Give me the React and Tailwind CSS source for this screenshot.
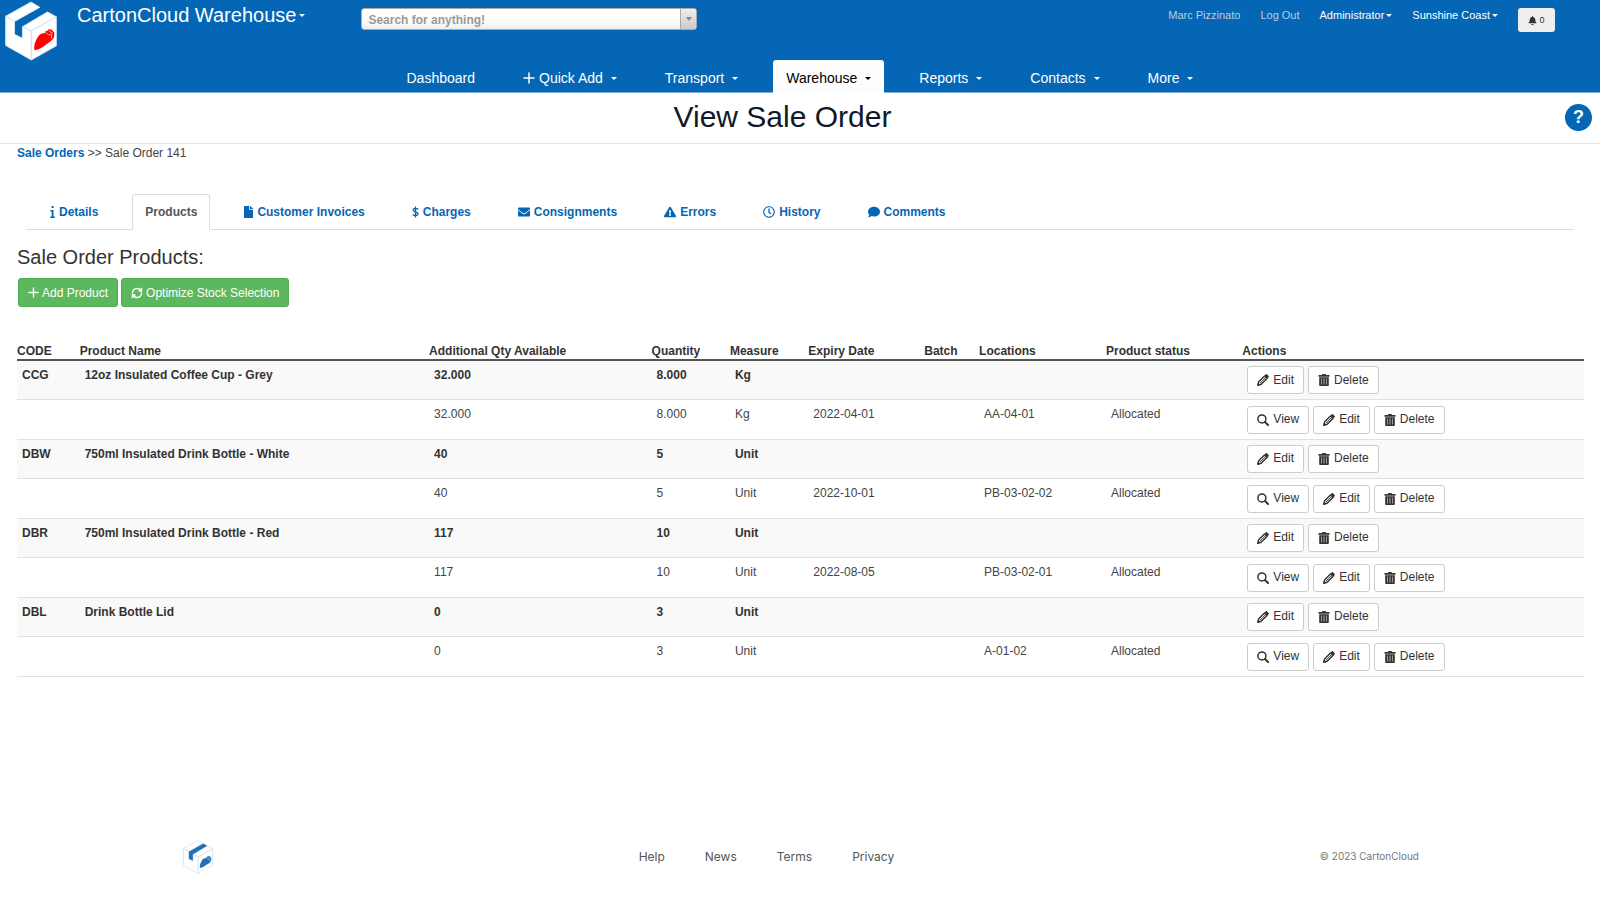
import { useState } from "react";
import { Plus, RefreshCw } from "lucide-react";
import {
  FaBell,
  FaComment,
  FaEnvelope,
  FaExclamationTriangle,
  FaFile,
  FaRegClock,
} from "react-icons/fa";

const NAV_ITEMS = [
  { label: "Dashboard" },
  { label: "Quick Add", icon: PlusIcon, menu: true },
  { label: "Transport", menu: true },
  { label: "Warehouse", menu: true, active: true },
  { label: "Reports", menu: true },
  { label: "Contacts", menu: true },
  { label: "More", menu: true },
];

const TABS = [
  { label: "Details", icon: InfoIcon, iconClass: "h-3 w-[5px]" },
  { label: "Products" },
  { label: "Customer Invoices", icon: FaFile, iconClass: "h-3 w-[9px]" },
  { label: "Charges", icon: DollarIcon, iconClass: "h-3 w-[7px]" },
  { label: "Consignments", icon: FaEnvelope, iconClass: "h-3 w-3" },
  { label: "Errors", icon: FaExclamationTriangle, iconClass: "h-3 w-3" },
  { label: "History", icon: FaRegClock, iconClass: "h-3 w-3" },
  { label: "Comments", icon: FaComment, iconClass: "h-3 w-3" },
];

const COLUMNS = [
  { label: "CODE", width: "w-[4%]" },
  { label: "Product Name", width: "w-[22.3%]" },
  { label: "Additional Qty Available", width: "w-[14.2%]" },
  { label: "Quantity", width: "w-[5%]" },
  { label: "Measure", width: "w-[5%]" },
  { label: "Expiry Date", width: "w-[7.4%]" },
  { label: "Batch", width: "w-[3.5%]" },
  { label: "Locations", width: "w-[8.1%]" },
  { label: "Product status", width: "w-[8.7%]" },
  { label: "Actions", width: "w-[21.8%]" },
];

const PRODUCTS = [
  { code: "CCG", name: "12oz Insulated Coffee Cup - Grey", available: "32.000", quantity: "8.000", measure: "Kg", expiry: "2022-04-01", location: "AA-04-01" },
  { code: "DBW", name: "750ml Insulated Drink Bottle - White", available: "40", quantity: "5", measure: "Unit", expiry: "2022-10-01", location: "PB-03-02-02" },
  { code: "DBR", name: "750ml Insulated Drink Bottle - Red", available: "117", quantity: "10", measure: "Unit", expiry: "2022-08-05", location: "PB-03-02-01" },
  { code: "DBL", name: "Drink Bottle Lid", available: "0", quantity: "3", measure: "Unit", expiry: "", location: "A-01-02" },
];

const FOOTER_LINKS = ["Help", "News", "Terms", "Privacy"];

function PlusIcon({ className }) {
  return (
    <svg viewBox="0 0 12 12" className={className} fill="none" stroke="currentColor" strokeWidth="1.500" strokeLinecap="round" aria-hidden="true">
      <path d="M6 1v10M1 6h10" />
    </svg>
  );
}

function InfoIcon({ className }) {
  return (
    <svg viewBox="0 0 5 12" className={className} fill="currentColor" aria-hidden="true">
      <path d="M1.600 0h2v2h-2zM.4 4h3.100v6.400h1.300V12H.2v-1.600h1.500V5.500H.4z" />
    </svg>
  );
}

function DollarIcon({ className }) {
  return (
    <svg viewBox="0 0 8 13" className={className} fill="none" stroke="currentColor" strokeWidth="1.500" strokeLinecap="round" aria-hidden="true">
      <path d="M4 .7v11.600M6.700 3.200C6 2.600 5 2.300 4 2.300 2.400 2.300 1.300 3 1.300 4.300c0 2.900 5.500 1.500 5.500 4.300 0 1.300-1.100 2.100-2.800 2.100-1.100 0-2.100-.4-2.900-1" />
    </svg>
  );
}

function PencilIcon({ className }) {
  return (
    <svg viewBox="0 0 12 12" className={className} fill="none" stroke="currentColor" aria-hidden="true">
      <path d="M.8 11.200l.9-3.400 5.800-5.800 2.500 2.500-5.800 5.800z" strokeWidth="1.400" strokeLinejoin="round" />
      <path d="M3 9.200l5.200-5.200" strokeWidth="1" />
      <path d="M7.600 1.500l1.100-1.100c.4-.4 1-.4 1.400 0l1.500 1.500c.4.4.4 1 0 1.400l-1.100 1.100z" fill="currentColor" stroke="none" />
      <path d="M.2 11.800l.7-3 2.300 2.300z" fill="currentColor" stroke="none" />
    </svg>
  );
}

function TrashIcon({ className }) {
  return (
    <svg viewBox="0 0 11 12" className={className} fill="currentColor" aria-hidden="true">
      <path d="M3.500 1V.8c0-.5.3-.8.8-.8h2.400c.5 0 .8.3.8.8V1H11v1.700H0V1z" />
      <path fillRule="evenodd" d="M.7 3.200h9.600V11c0 .6-.4 1-1 1H1.700c-.6 0-1-.4-1-1zM2.700 4.500v6h.5v-6zM5.200 4.500v6h.6v-6zM7.800 4.500v6h.5v-6z" />
    </svg>
  );
}

function SearchIcon({ className }) {
  return (
    <svg viewBox="0 0 12 12" className={className} fill="none" stroke="currentColor" aria-hidden="true">
      <circle cx="4.900" cy="4.900" r="4" strokeWidth="1.500" />
      <path d="M8 8l3 3" strokeWidth="2" strokeLinecap="round" />
    </svg>
  );
}

function Caret() {
  return <span className="inline-block border-x-[3px] border-t-[3px] border-x-transparent border-t-current" />;
}

function Logo({ className, strap = "none", outline, badge }) {
  return (
    <svg viewBox="13 3 158 180" className={className} role="img" aria-label="CartonCloud">
      <path d="M42 64l76-44 24 15-76 45v35l-24-12z" fill={strap} />
      <g fill="#fff" stroke={outline} strokeWidth="3" strokeLinejoin="round">
        <path d="M15 48L92 5l27 16-77 43z" />
        <path d="M15 48l27 16v39l24 12V80l27 13v88l-78-44z" />
        <path d="M66 80l76-45 27 15-76 43z" />
        <path d="M93 93l76-43v88l-76 43z" />
      </g>
      <path d="M102 151c-2-15 3-28 11-40 5-8 12-13 20-11l4-7 6-1 2-4 10 1 8 9-1 13c-5 12-17 17-27 25-10 8-20 14-33 15z" fill={badge} />
      <path d="M136 97l10 8 8-2 1 13M146 92l12 8" fill="none" stroke="#fff" strokeWidth="2" />
    </svg>
  );
}

function ActionButton({ icon: Icon, children }) {
  return (
    <button
      type="button"
      className="flex h-7 items-center gap-1 rounded-[3px] border border-[#ccc] bg-white px-[9px] text-[#333] hover:bg-gray-100"
    >
      <Icon className="h-3 w-3" />
      {children}
    </button>
  );
}

function Header() {
  const [query, setQuery] = useState("");

  return (
    <header className="flex h-[93px] flex-col justify-between border-b border-[#7fb0d8] bg-[#0466b4] text-white">
      <div className="flex h-[60px] items-start">
        <a href="#" className="ml-[5px] mt-px shrink-0">
          <Logo className="h-[60px] w-[52px]" outline="#cfe3f4" badge="#ff0000" />
        </a>
        <button type="button" className="ml-5 flex items-center gap-[3px] text-xl leading-[30px]">
          CartonCloud Warehouse <Caret />
        </button>
        <div className="ml-14 mt-2 flex h-[22px] w-[336px] overflow-hidden rounded-[3px] border border-[#aaa] bg-gradient-to-b from-white from-50% to-[#eee]">
          <input
            type="text"
            aria-label="Search"
            value={query}
            onChange={(e) => setQuery(e.target.value)}
            placeholder="Search for anything!"
            className="min-w-0 flex-1 px-1.5 pt-0.5 text-xs font-bold text-[#444] outline-none placeholder:text-[#999]"
          />
          <button
            type="button"
            aria-label="Open search"
            className="flex w-4 items-center justify-center border-l border-[#aaa] bg-gradient-to-b from-[#eee] to-[#ccc] text-[#888]"
          >
            <span className="border-x-[3px] border-t-4 border-x-transparent border-t-current" />
          </button>
        </div>
        <div className="ml-auto mr-[45px] flex items-start text-[11px] leading-[30px]">
          <a href="#" className="mr-5 text-[#b9cfe3]">Marc Pizzinato</a>
          <a href="#" className="mr-5 text-[#b9cfe3]">Log Out</a>
          <button type="button" className="mr-5 flex items-center gap-0.5">Administrator <Caret /></button>
          <button type="button" className="mr-5 flex items-center gap-0.5">Sunshine Coast <Caret /></button>
          <button
            type="button"
            aria-label="Notifications"
            className="mt-2 flex h-6 w-[37px] items-center justify-center gap-0.5 rounded-[3px] bg-[#eee] text-[9px] text-[#333]"
          >
            <FaBell className="h-[9px] w-[9px]" /> 0
          </button>
        </div>
      </div>
      <nav className="flex justify-center gap-[22px] text-sm">
        {NAV_ITEMS.map(({ label, icon: Icon, menu, active }) => (
          <a
            key={label}
            href="#"
            className={`flex items-center rounded-t-[3px] px-[13px] pt-[3px] ${active ? "-mb-px h-[33px] bg-[#fdfdfd] pb-px text-black" : "h-8 text-white"}`}
          >
            {Icon && <Icon className="mr-1 h-3 w-3" />}
            {label}
            {menu && <span className="ml-2 flex pt-0.5"><Caret /></span>}
          </a>
        ))}
      </nav>
    </header>
  );
}

function ProductRows({ product }) {
  return (
    <>
      <tr className="h-[39px] border-b border-[#e0e0e0] bg-[#f9f9f9] font-bold text-[#333]">
        <td className="px-[5px] pt-1.5">{product.code}</td>
        <td className="px-[5px] pt-1.5">{product.name}</td>
        <td className="px-[5px] pt-1.5">{product.available}</td>
        <td className="px-[5px] pt-1.5">{product.quantity}</td>
        <td className="px-[5px] pt-1.5">{product.measure}</td>
        <td />
        <td />
        <td />
        <td />
        <td className="px-[5px] pt-[5px] font-normal">
          <div className="flex gap-1">
            <ActionButton icon={PencilIcon}>Edit</ActionButton>
            <ActionButton icon={TrashIcon}>Delete</ActionButton>
          </div>
        </td>
      </tr>
      <tr className="h-10 border-b border-[#e0e0e0] text-[#444]">
        <td />
        <td />
        <td className="px-[5px] pt-1.5">{product.available}</td>
        <td className="px-[5px] pt-1.5">{product.quantity}</td>
        <td className="px-[5px] pt-1.5">{product.measure}</td>
        <td className="px-[5px] pt-1.5">{product.expiry}</td>
        <td />
        <td className="px-[5px] pt-1.5">{product.location}</td>
        <td className="px-[5px] pt-1.5">Allocated</td>
        <td className="px-[5px] pt-1.5">
          <div className="flex gap-1">
            <ActionButton icon={SearchIcon}>View</ActionButton>
            <ActionButton icon={PencilIcon}>Edit</ActionButton>
            <ActionButton icon={TrashIcon}>Delete</ActionButton>
          </div>
        </td>
      </tr>
    </>
  );
}

export default function App() {
  const [activeTab, setActiveTab] = useState("Products");

  return (
    <div className="flex min-h-screen flex-col bg-white font-['Liberation_Sans',Arial,sans-serif] text-xs text-[#444]">
      <Header />

      <div className="flex h-[51px] items-center border-b border-[#e5e5e5] pb-0.5 pr-2">
        <h1 className="flex-1 text-center text-3xl leading-8 text-[#111827]">View Sale Order</h1>
        <button
          type="button"
          aria-label="Help"
          className="flex h-[27px] w-[27px] items-center justify-center rounded-full bg-[#0466b4] text-lg font-bold text-white"
        >
          ?
        </button>
      </div>

      <main className="pl-[17px] pr-4">
        <div className="pt-px leading-[17px]">
          <a href="#" className="font-bold text-[#0466b4]">Sale Orders</a> &gt;&gt; Sale Order 141
        </div>

        <div role="tablist" className="ml-[9px] mr-2.5 mt-8 flex gap-[21px] border-b border-[#ddd] pl-[11px]">
          {TABS.map(({ label, icon: Icon, iconClass }) => (
            <button
              key={label}
              type="button"
              role="tab"
              aria-selected={activeTab === label}
              onClick={() => setActiveTab(label)}
              className={`-mb-px flex h-9 items-center gap-1 rounded-t-[3px] border px-3 font-bold ${
                activeTab === label
                  ? "border-[#ddd] border-b-white bg-white text-[#555]"
                  : "border-transparent text-[#0466b4]"
              }`}
            >
              {Icon && <Icon className={iconClass} />}
              {label}
            </button>
          ))}
        </div>

        <h2 className="mt-[15px] text-xl leading-6 text-[#333]">Sale Order Products:</h2>

        <div className="ml-px mt-[9px] flex gap-[3px] text-white">
          <button type="button" className="flex h-[29px] items-center gap-[3px] rounded-[3px] border border-[#4cae4c] bg-[#5cb85c] px-[9px]">
            <PlusIcon className="h-[11px] w-[11px]" /> Add Product
          </button>
          <button type="button" className="flex h-[29px] items-center gap-[3px] rounded-[3px] border border-[#4cae4c] bg-[#5cb85c] px-[9px]">
            <RefreshCw className="h-3 w-3" strokeWidth={3} /> Optimize Stock Selection
          </button>
        </div>

        <table className="mt-[35px] w-full table-fixed border-collapse text-left leading-[17px]">
          <thead>
            <tr className="border-b-2 border-[#555] text-[#333]">
              {COLUMNS.map(({ label, width }) => (
                <th key={label} className={`whitespace-nowrap pt-px font-bold leading-4 ${width}`}>{label}</th>
              ))}
            </tr>
          </thead>
          <tbody className="align-top">
            {PRODUCTS.map((product) => (
              <ProductRows key={product.code} product={product} />
            ))}
          </tbody>
        </table>
      </main>

      <footer className="mt-auto flex items-center justify-between pb-[26px] pl-[183px] pr-[181px] font-['Inter',sans-serif] text-[#555]">
        <Logo className="h-[34px] w-[30px]" strap="#1f70b8" outline="#c3d9ec" badge="#1f70b8" />
        <nav className="flex gap-10">
          {FOOTER_LINKS.map((label) => (
            <a key={label} href="#">{label}</a>
          ))}
        </nav>
        <p className="text-[10px] text-[#777]">© 2023 CartonCloud</p>
      </footer>
    </div>
  );
}
